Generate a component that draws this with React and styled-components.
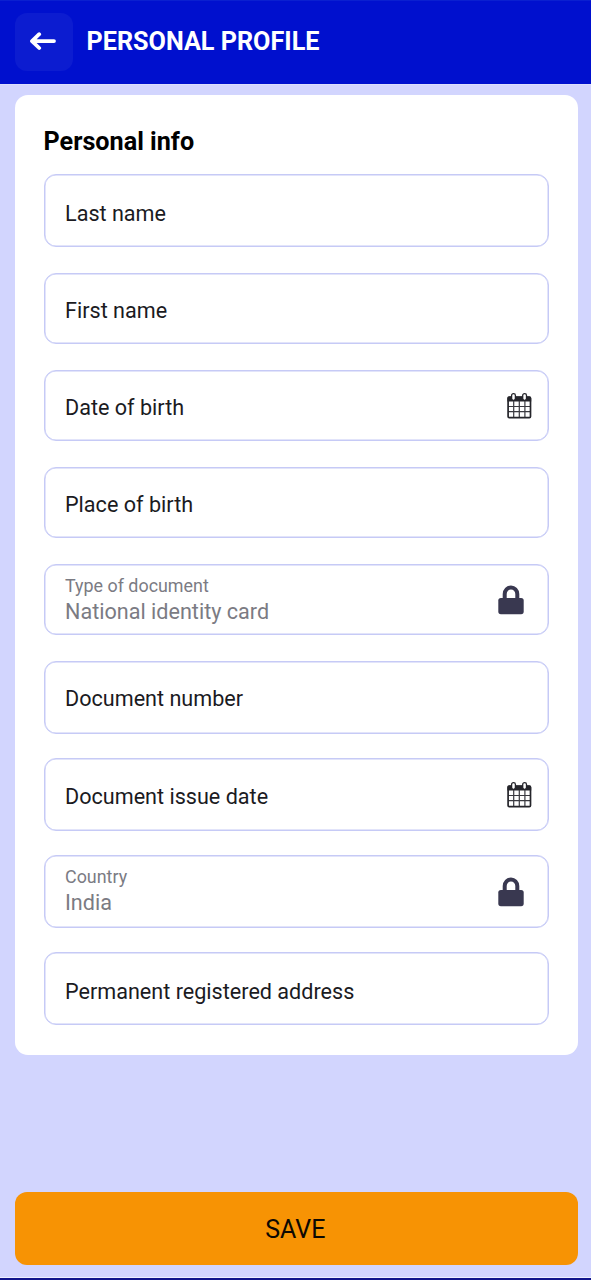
import React from "react";
import styled, { createGlobalStyle } from "styled-components";

const FIELDS = [
  { label: "Last name", row: 99, height: 73, shift: 6 },
  { label: "First name", height: 71, shift: 4 },
  { label: "Date of birth", height: 71, shift: 4, icon: "calendar" },
  { label: "Place of birth", height: 71, shift: 4 },
  {
    label: "Type of document",
    value: "National identity card",
    height: 71,
    icon: "lock",
  },
  { label: "Document number", height: 73, shift: 3 },
  { label: "Document issue date", height: 73, shift: 4, icon: "calendar" },
  { label: "Country", value: "India", height: 73, icon: "lock", lift: 2 },
  { label: "Permanent registered address", height: 73, shift: 6 },
];

function BackIcon() {
  return (
    <svg width="28" height="20" viewBox="0 0 28 20" fill="none">
      <path
        d="M25 9.1H3.6M10.2 2.2L3 9.1L10.2 16"
        stroke="#fff"
        strokeWidth="3.8"
        strokeLinecap="round"
        strokeLinejoin="round"
      />
    </svg>
  );
}

function CalendarIcon() {
  return (
    <svg width="25" height="26" viewBox="0 0 25 26">
      <rect x="1" y="4.5" width="22.6" height="19.8" rx="1.4" fill="#fff" />
      <path
        d="M.4 8.6V4.9Q.4 3.4 1.9 3.4H22.7Q24.2 3.4 24.2 4.9V8.6Z"
        fill="#25252b"
      />
      <path
        d="M1 13.5H23.6M1 18.7H23.6M6.7 8V24.3M12.3 8V24.3M17.9 8V24.3"
        stroke="#3a3a40"
        strokeWidth="1.2"
      />
      <rect
        x="1.1"
        y="4.2"
        width="22.4"
        height="20.4"
        rx="1.2"
        fill="none"
        stroke="#25252b"
        strokeWidth="1.7"
      />
      <rect
        x="4.6"
        y=".7"
        width="3.8"
        height="6.6"
        rx="1.8"
        fill="#fff"
        stroke="#25252b"
        strokeWidth="1.3"
      />
      <rect
        x="15.7"
        y=".7"
        width="3.8"
        height="6.6"
        rx="1.8"
        fill="#fff"
        stroke="#25252b"
        strokeWidth="1.3"
      />
    </svg>
  );
}

function LockIcon() {
  return (
    <svg width="26" height="30" viewBox="0 0 26 30">
      <path
        d="M6.7 15V9A6.3 6.6 0 0 1 19.3 9V15"
        fill="none"
        stroke="#393850"
        strokeWidth="4"
      />
      <rect x=".3" y="13" width="25.4" height="16.2" rx="2.6" fill="#393850" />
    </svg>
  );
}

export default function App() {
  return (
    <Screen>
      <GlobalStyle />
      <Header>
        <BackButton aria-label="Back">
          <BackIcon />
        </BackButton>
        <Title>PERSONAL PROFILE</Title>
      </Header>
      <Card>
        <CardHeading>Personal info</CardHeading>
        {FIELDS.map((field) => (
          <FieldRow key={field.label} $height={field.row}>
            <Field $height={field.height} $icon={field.icon}>
              {field.value ? (
                <Locked $lift={field.lift}>
                  <SmallLabel>{field.label}</SmallLabel>
                  <Value>{field.value}</Value>
                </Locked>
              ) : (
                <Label $shift={field.shift}>{field.label}</Label>
              )}
              {field.icon === "calendar" && <CalendarIcon />}
              {field.icon === "lock" && <LockIcon />}
            </Field>
          </FieldRow>
        ))}
      </Card>
      <SaveButton>SAVE</SaveButton>
      <BottomBar />
    </Screen>
  );
}

const GlobalStyle = createGlobalStyle`
  * {
    box-sizing: border-box;
  }
  body {
    margin: 0;
    font-family: Roboto, sans-serif;
  }
`;
const Screen = styled.div`
  height: 1280px;
  display: flex;
  flex-direction: column;
  background: #d2d5fe;
`;
const Header = styled.header`
  height: 85px;
  display: flex;
  align-items: flex-start;
  padding: 12px 15px 0;
  background: #0010ce;
  border-top: 1px solid #0a1fd0;
  border-bottom: 1px solid #dcdffc;
`;
const BackButton = styled.button`
  width: 58px;
  height: 58px;
  display: flex;
  align-items: center;
  justify-content: center;
  padding: 0 2px 0 0;
  border: none;
  border-radius: 12px;
  background: #0c1cd0;
`;
const Title = styled.h1`
  margin: 0 0 0 13.5px;
  font-size: 25.2px;
  line-height: 57px;
  font-weight: bold;
  color: #fff;
`;
const Card = styled.main`
  height: 960px;
  margin: 10px 13px 0 15px;
  padding: 30px 29px 0;
  border-radius: 13px;
  background: #fff;
`;
const CardHeading = styled.h2`
  height: 49px;
  margin: 0 0 0 -0.5px;
  font-size: 25.2px;
  line-height: 33px;
  font-weight: bold;
  color: #000;
`;
const FieldRow = styled.div`
  height: ${(props) => props.$height || 97}px;
`;
const Field = styled.div`
  height: ${(props) => props.$height}px;
  margin-right: 0.5px;
  display: flex;
  align-items: center;
  justify-content: space-between;
  padding: 0 ${(props) => (props.$icon === "lock" ? 23.5 : 16)}px 0 20px;
  border: 1px solid #c6caf6;
  border-radius: 12px;
  box-shadow: inset 0 0 0 0.5px #c6caf6;
`;
const Label = styled.span`
  padding-top: ${(props) => props.$shift}px;
  font-size: 21.6px;
  line-height: 26px;
  color: #1b1b1f;
`;
const Locked = styled.div`
  display: flex;
  flex-direction: column;
  padding-bottom: ${(props) => props.$lift || 0}px;
  color: #7b7b83;
`;
const SmallLabel = styled.span`
  font-size: 17.9px;
  line-height: 24px;
`;
const Value = styled.span`
  font-size: 21.6px;
  line-height: 28px;
`;
const SaveButton = styled.button`
  height: 73px;
  margin: auto 13.5px 12px 15px;
  padding: 2px 8px 0 6px;
  border: none;
  border-radius: 12px;
  background: #f79304;
  font-family: inherit;
  font-size: 25px;
  color: #0d0903;
`;
const BottomBar = styled.div`
  height: 3px;
  background: #10148c;
  border-top: 1px solid #eef0ff;
`;
